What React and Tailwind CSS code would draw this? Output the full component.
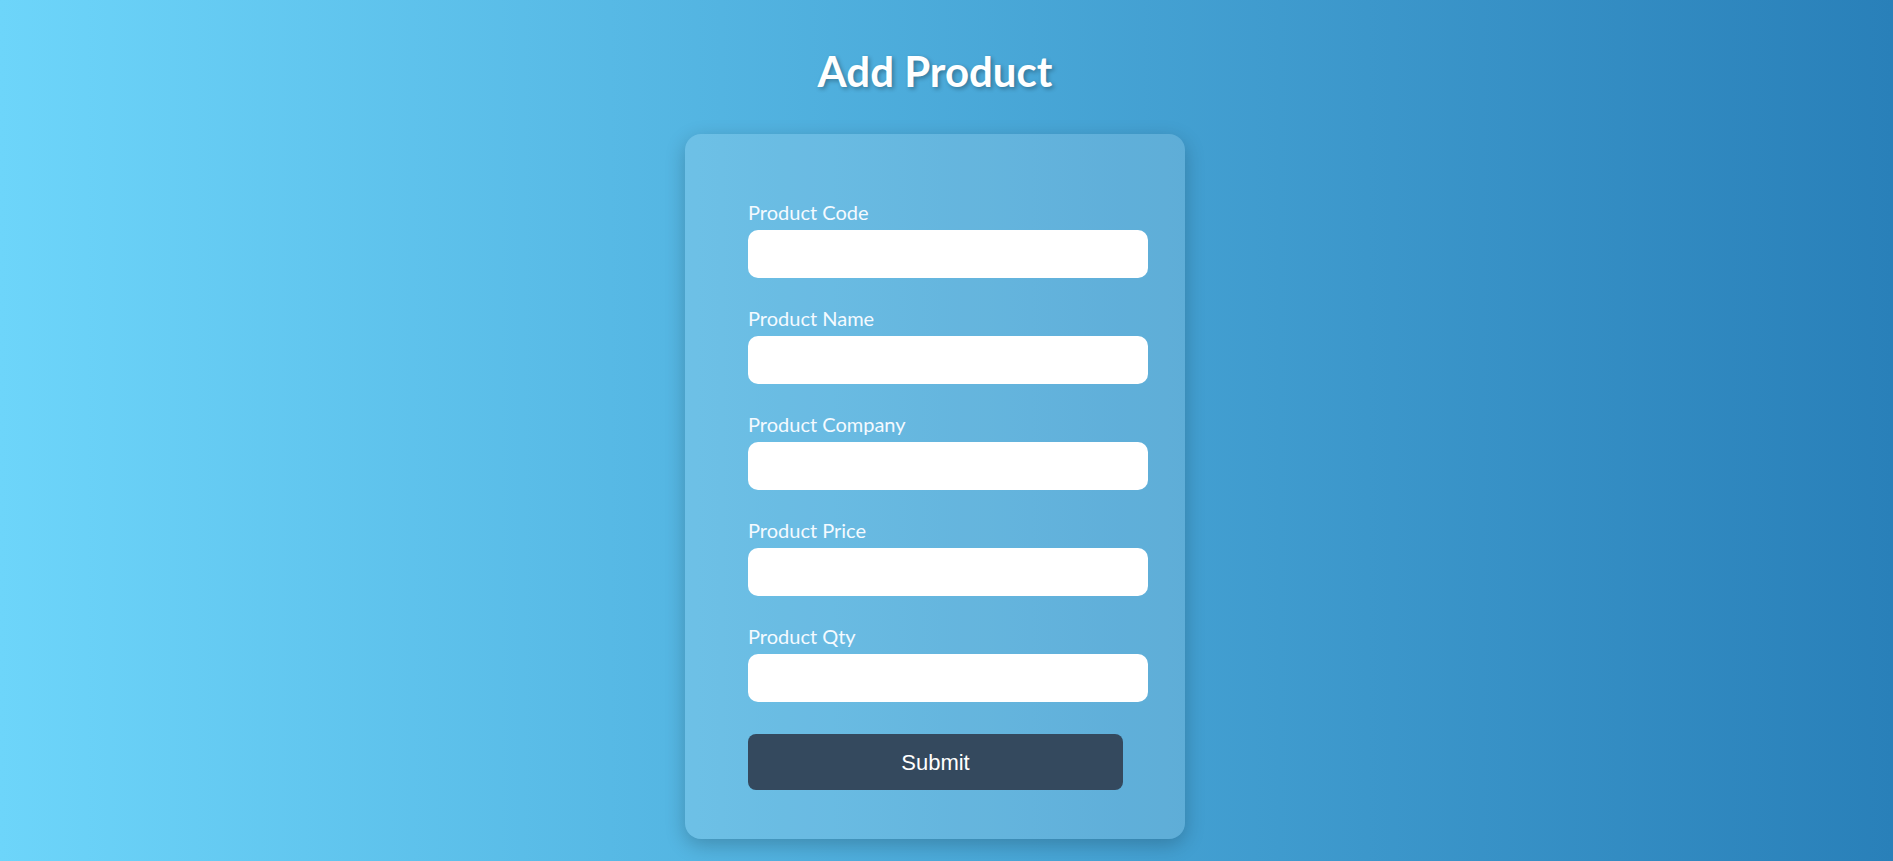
const fields = ['Product Code', 'Product Name', 'Product Company', 'Product Price', 'Product Qty']

function Field({ label }) {
  return (
    <div className="flex flex-col gap-[6px]">
      <label className="text-[20px] leading-[24px] text-[#f4faff]">{label}</label>
      <input type="text" className="h-[48px] w-full rounded-[10px] bg-white outline-none border-0 px-3" />
    </div>
  )
}

export default function App() {
  return (
    <div
      className="min-h-screen w-full bg-gradient-to-r from-[#6dd5fa] to-[#2980b9] pr-[23px]"
      style={{ fontFamily: 'Lato, "Open Sans", sans-serif' }}
    >
      <div className="flex flex-col items-center pt-[47px] pb-[22px]">
        <h1 className="text-[42px] leading-[48px] font-bold text-white [text-shadow:2px_2px_4px_rgba(0,0,0,0.3)]">
          Add Product
        </h1>

        <div className="mt-[39px] w-[500px] rounded-2xl bg-white/15 pl-[63px] pr-[37px] pt-[66px] pb-[49px] shadow-[0_6px_20px_rgba(0,0,0,0.22)]">
          <form className="flex flex-col gap-[28px]" onSubmit={(e) => e.preventDefault()}>
            {fields.map((f) => (
              <Field key={f} label={f} />
            ))}
            <button
              type="submit"
              className="mt-[4px] h-[56px] w-[375px] rounded-lg bg-[#34495e] text-[22px] text-white"
              style={{ fontFamily: '"Liberation Sans", Arial, sans-serif' }}
            >
              Submit
            </button>
          </form>
        </div>
      </div>
    </div>
  )
}
